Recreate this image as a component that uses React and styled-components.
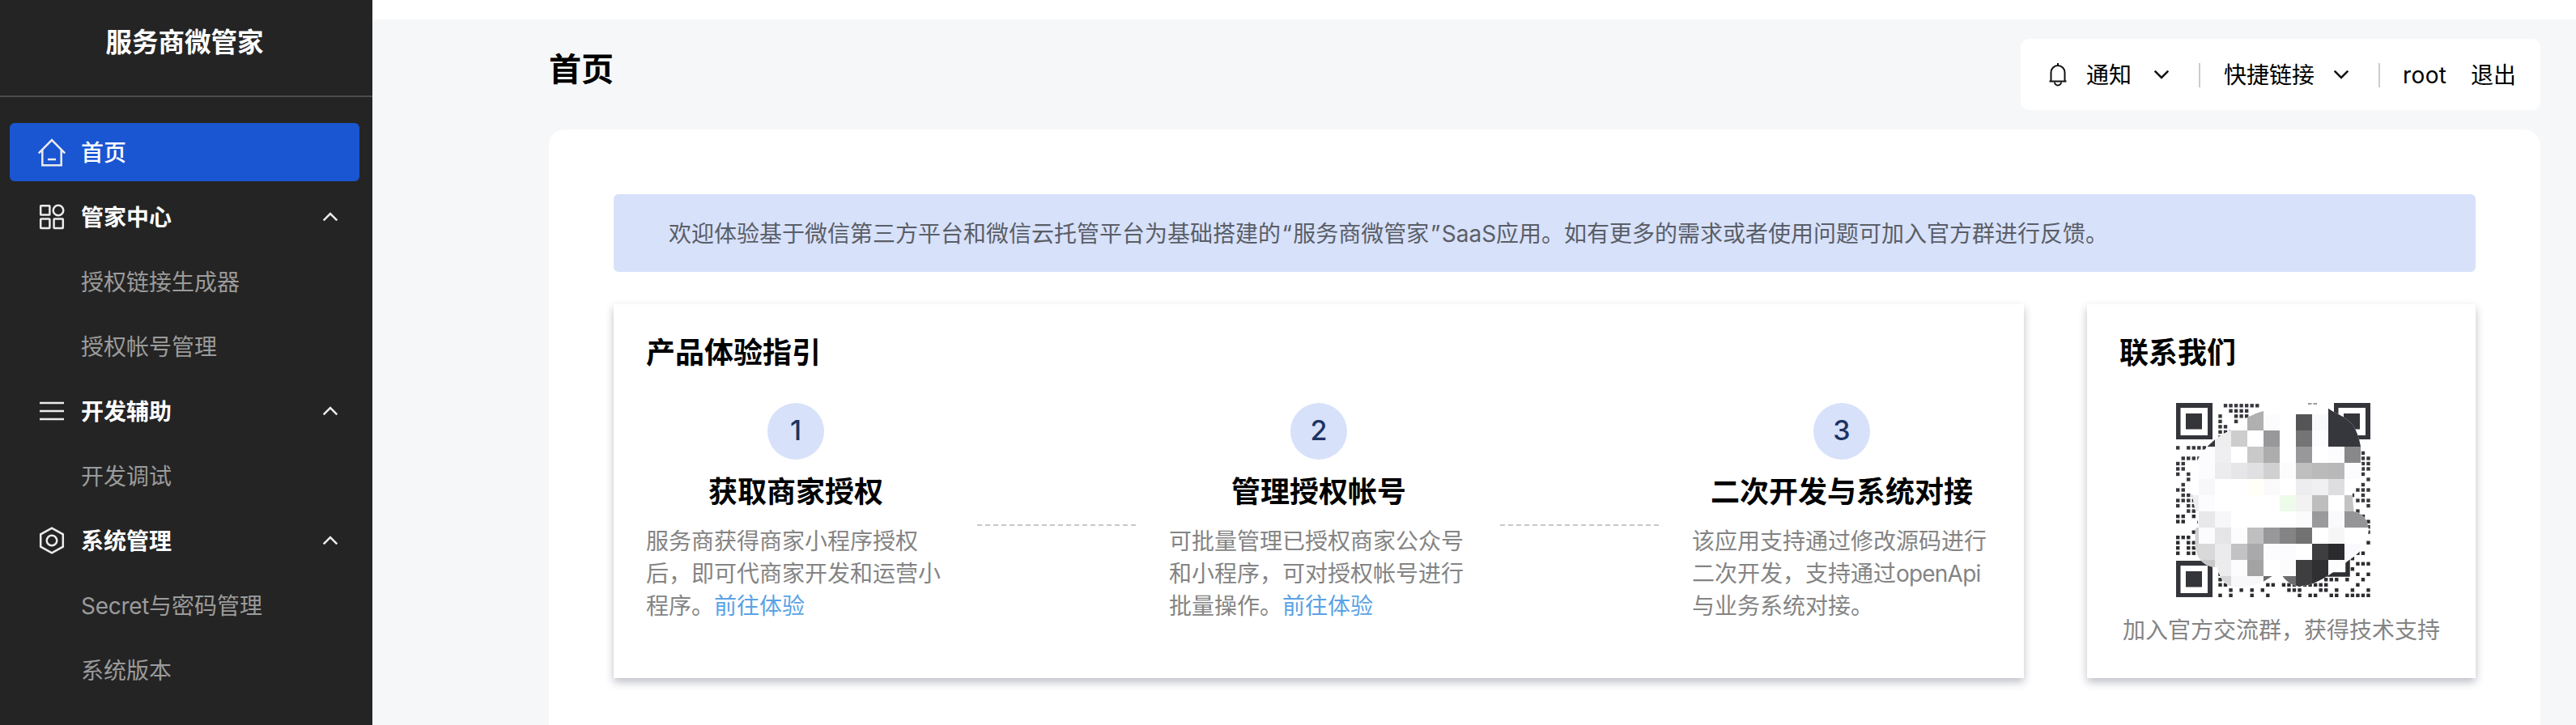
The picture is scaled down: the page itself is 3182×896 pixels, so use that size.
import React from "react";
import styled, { createGlobalStyle, css } from "styled-components";

const GlobalStyle = createGlobalStyle`
  *, *::before, *::after { box-sizing: border-box; }
  html, body { margin: 0; padding: 0; }
  body {
    background: #fff;
    color: #000;
    font-family: Inter, "Noto Sans CJK SC", sans-serif;
    font-size: 28px;
    line-height: 40px;
  }
  h1, h2, h3, p { margin: 0; }
`;

const Page = styled.div`
  display: flex;
  height: 896px;
  overflow: hidden;
`;

/* Latin run inside Chinese text, with its own tracking */
const Latin = styled.span`
  letter-spacing: ${(p) => p.$track}px;
`;

/* ---------- sidebar ---------- */

const Sidebar = styled.aside`
  width: 460px;
  flex: none;
  background: #242424;
  color: #fff;
`;

const Brand = styled.div`
  height: 120px;
  padding: 31px 4px 0 0;
  border-bottom: 2px solid #4b4b4b;
  text-align: center;
  font-size: 32.5px;
  font-weight: 700;
  line-height: 44px;
`;

const Menu = styled.nav`
  display: flex;
  flex-direction: column;
  gap: 8px;
  padding: 32px 16px 0 12px;
`;

const MenuRow = styled.a`
  display: flex;
  align-items: center;
  height: 72px;
  padding: 0 26px 0 32px;
  border-radius: 6px;
  white-space: nowrap;
  font-weight: ${(p) => (p.$kind === "group" ? 700 : p.$kind === "home" ? 500 : 400)};
  color: ${(p) => (p.$kind === "sub" ? "#9b9b9b" : "#fff")};
  ${(p) => p.$kind === "sub" && css`padding-left: 88px;`}
  ${(p) => p.$kind === "home" && css`background: #1a56d2;`}
`;

const MenuIcon = styled.svg`
  width: 40px;
  height: 40px;
  flex: none;
  margin-right: 16px;
  fill: none;
  stroke: #ebebeb;
  stroke-width: 2.5;
`;

const MenuLabel = styled.span`
  flex: 1;
  padding-top: 2px;
`;

const ChevronSvg = styled.svg`
  width: 20px;
  height: 12px;
  flex: none;
  fill: none;
  stroke: ${(p) => p.$color};
  stroke-width: 2.5;
  transform: ${(p) => (p.$up ? "none" : "rotate(180deg)")};
`;

const Chevron = ({ up, color }) => (
  <ChevronSvg viewBox="0 0 20 12" $up={up} $color={color}>
    <path d="M1.7 10.3 10 2l8.3 8.3" />
  </ChevronSvg>
);

const icons = {
  home: (
    <>
      <path d="M3.8 21.3 20 5l16.2 16.3" />
      <path d="M8.3 17v19.2h23.4V17" />
      <path d="M15 29h10" />
    </>
  ),
  app: (
    <>
      <rect x="6.2" y="6.2" width="11.2" height="11.3" rx="0.6" />
      <circle cx="28" cy="12" r="6.3" />
      <rect x="6.2" y="22.6" width="11.2" height="11.3" rx="0.6" />
      <rect x="22.6" y="22.6" width="11.2" height="11.3" rx="0.6" />
    </>
  ),
  list: <path d="M5 10h30M5 20h30M5 30h30" />,
  setting: (
    <>
      <path d="M20 4.7 33.8 12.3v15.4L20 35.3 6.2 27.7V12.3z" />
      <circle cx="20" cy="20" r="6.3" />
    </>
  ),
};

const menu = [
  { kind: "home", label: "首页", icon: "home" },
  { kind: "group", label: "管家中心", icon: "app" },
  { kind: "sub", label: "授权链接生成器" },
  { kind: "sub", label: "授权帐号管理" },
  { kind: "group", label: "开发辅助", icon: "list" },
  { kind: "sub", label: "开发调试" },
  { kind: "group", label: "系统管理", icon: "setting" },
  { kind: "sub", latin: "Secret", label: "与密码管理" },
  { kind: "sub", label: "系统版本" },
];

/* ---------- main area ---------- */

const Main = styled.main`
  flex: 1;
  margin-top: 24px;
  padding: 24px 44px 0 218px;
  background: #f6f7f9;
  display: flex;
  flex-direction: column;
`;

const Header = styled.header`
  display: flex;
  justify-content: space-between;
  height: 112px;
  flex: none;
`;

const PageTitle = styled.h1`
  padding-top: 10px;
  font-size: 40px;
  font-weight: 700;
  line-height: 56px;
`;

const Toolbar = styled.div`
  display: flex;
  align-items: center;
  width: 642px;
  height: 88px;
  padding: 0 30px 0 30px;
  border-radius: 10px;
  background: #fff;
  white-space: nowrap;
`;

const BellSvg = styled.svg`
  width: 32px;
  height: 32px;
  margin-right: 19px;
  fill: none;
  stroke: #111;
  stroke-width: 2;
`;

const ToolText = styled.span`
  width: ${(p) => p.$width}px;
  flex: none;
  padding-top: 2px;
`;

const Divider = styled.i`
  width: 2px;
  height: 30px;
  flex: none;
  margin: 2px ${(p) => p.$after}px 0 36px;
  background: #ccc;
`;

const Panel = styled.section`
  flex: 1;
  padding: 80px 80px 0;
  border-radius: 20px 20px 0 0;
  background: #fff;
`;

const Banner = styled.p`
  height: 96px;
  padding: 0 68px;
  border-radius: 6px;
  background: #d7e1fa;
  color: #5a5e67;
  line-height: 98px;
  white-space: nowrap;
`;

const Quote = styled.span`
  padding: 0 1.5px;
`;

const Cards = styled.div`
  display: flex;
  justify-content: space-between;
  margin-top: 40px;
`;

const Card = styled.section`
  width: ${(p) => p.$width}px;
  height: 462px;
  padding: 35px 40px 0;
  background: #fff;
  box-shadow: 0 5px 10px rgba(54, 58, 80, 0.32);
`;

const CardTitle = styled.h2`
  font-size: 36px;
  font-weight: 700;
  line-height: 50px;
`;

const Steps = styled.div`
  display: flex;
  margin-top: 37px;
`;

const Step = styled.div`
  width: 370px;
  flex: none;
  display: flex;
  flex-direction: column;
  align-items: center;
`;

const StepNumber = styled.div`
  width: 70px;
  height: 70px;
  border-radius: 50%;
  background: #d7e1fa;
  color: #1d3362;
  font-size: 34px;
  font-weight: 500;
  line-height: 68px;
  text-align: center;
`;

const StepTitle = styled.h3`
  margin-top: 15px;
  font-size: 36px;
  font-weight: 700;
  line-height: 50px;
  white-space: nowrap;
`;

const StepText = styled.p`
  width: 100%;
  margin-top: 16px;
  color: #848484;
`;

const StepLink = styled.a`
  color: #5aa2e5;
`;

const StepLine = styled.div`
  width: 196px;
  height: 2px;
  flex: none;
  margin: 150px 41px 0 39px;
  background: repeating-linear-gradient(90deg, #c8c8c8 0 6px, transparent 6px 10px);
`;

const QrSvg = styled.svg`
  display: block;
  width: 240px;
  height: 240px;
  margin: 37px 0 0 70px;
`;

const Caption = styled.p`
  margin-top: 21px;
  color: #848484;
  text-align: center;
  white-space: nowrap;
`;

/* Visible modules of the code, row by row, as column numbers */
const qrRows = {
  0: [9, 10, 11, 12, 13, 14, 15],
  1: [10, 11, 12, 13],
  2: [8, 11, 12, 13],
  3: [8, 11],
  4: [8, 9],
  5: [8, 9, 10],
  6: [8],
  8: [0, 2, 3, 4, 5, 6],
  9: [35],
  10: [1, 2, 3, 4, 35, 36],
  11: [0, 1, 4, 35, 36],
  12: [0, 1, 35, 36],
  13: [0, 2, 35],
  14: [2, 36],
  15: [1, 35],
  16: [0, 1, 34, 35, 36],
  17: [1, 2, 3, 33, 35],
  18: [0, 1, 2, 3, 34, 35, 36],
  19: [0, 2, 3, 36],
  20: [2, 3, 34],
  21: [0, 1, 3, 35],
  22: [0, 1, 4, 36],
  23: [4, 36],
  24: [3, 36],
  25: [0, 1, 2],
  26: [0, 2, 3, 36],
  27: [0, 2, 3],
  28: [0, 2, 3, 34, 35],
  29: [33],
  30: [34, 35, 36],
  31: [33],
  32: [8, 34, 36],
  33: [8, 9, 28, 29, 30, 32, 35],
  34: [8, 9, 17, 18, 20, 21, 22, 23, 24, 25, 26, 27, 28, 34],
  35: [10, 12, 14, 16, 21, 22, 23, 27, 28, 30, 33, 36],
  36: [8, 10, 14, 17, 23, 25, 26, 29, 30, 32, 33, 34, 35, 36],
};

/* 20px tiles of the mosaic; the first column starts at x=8, the first row at y=-6 */
const W = "#fff";
const P = "#fcfcff";
const D = "#36373c";
const mosaic = [
  [W, W, W, W, "#adadae", W, W, W, W, D, W, W],
  [W, W, W, W, "#b0b0b1", P, W, "#555557", "#f9f9f9", D, D, W],
  [W, D, "#eeeeef", "#cdcdce", W, "#98989a", W, "#747475", P, D, D, W],
  [W, P, "#efeff1", W, "#c9c9ca", "#adadae", W, "#98989a", W, P, "#88888a", W],
  [W, P, "#ececee", "#e6e6e8", "#e0e0e2", "#d0d0d1", "#fcfcfc", "#bfbfc0", "#bababb", "#b8b8b9", P, W],
  [W, "#f7f7fa", W, W, "#fffff8", "#fafafb", W, "#ededef", "#f0f0f2", "#dedee0", W, W],
  ["#efeff0", P, W, W, W, W, "#edfbea", "#f2f2f2", "#bebebf", W, "#c3c3c4", W],
  [W, "#e8e8ea", "#f7f7fa", W, W, W, W, "#fbfbfb", "#9a9a9c", "#fafafc", "#959597", "#959597"],
  ["#d0d0d2", P, "#e5e5e7", "#fcfcfc", "#bfbfc0", "#98989a", "#848485", "#727273", W, "#f6f6f6", W, W],
  ["#d6d6d8", "#d9d9da", "#ebebed", "#c2c2c3", "#a9a9ab", P, P, W, "#3e3e40", "#2b2b2d", "#fafafe", W],
  ["#c8c8c9", "#c8c8c9", "#ececec", P, "#a3a3a4", W, "#fcfcfc", "#3e3e3f", "#303032", "#fdfdfd", W, W],
  [W, W, "#d6d6d6", "#f8f8fb", "#f8f8fb", "#6d6d6e", "#6d6d6e", "#3e3e40", "#303033", W, W, W],
];

const Finder = ({ x, y }) => (
  <g transform={`translate(${x} ${y})`}>
    <path fill="#34353a" fillRule="evenodd" d="M0 0h45v45H0zM5.5 6v34H39V6z" />
    <rect x="12" y="13" width="20" height="19.5" fill="#34353a" />
  </g>
);

const QrCode = () => (
  <QrSvg viewBox="0 0 240 240">
    <defs>
      <clipPath id="smudge">
        <path
          transform="translate(-18 -18) scale(.33333)"
          d="M378 84Q345 92 318 108Q280 138 256 155Q225 168 198 190Q170 212 150 240Q132 262 130 285
             L130 320Q104 360 112 390L136 500Q124 515 125 540L125 590Q132 625 150 642Q172 664 207 664
             Q215 700 232 718Q246 732 262 736Q320 742 378 716L414 694L444 690Q464 720 490 730
             Q525 738 560 724Q600 708 640 678L690 640Q738 608 755 575Q774 530 762 496Q748 462 713 457
             L706 385Q742 350 742 290L738 215Q730 170 712 140Q690 112 660 98Q638 88 618 74
             Q600 60 575 59L540 60Q530 46 500 46L400 46Q378 50 378 84Z"
        />
      </clipPath>
    </defs>
    {Object.entries(qrRows).map(([r, cols]) =>
      cols.map((c) => (
        <rect
          key={`${r}-${c}`}
          x={c * 6.536}
          y={1.1 + r * 6.515}
          width="4.4"
          height="4.4"
          fill={r > 20 ? "#2c2d30" : "#37383d"}
        />
      ))
    )}
    <Finder x={0} y={0} />
    <Finder x={195} y={0} />
    <Finder x={0} y={195} />
    <path d="M185 185h27v27h-27z" fill="none" stroke="#2d2e31" strokeWidth="5.5" />
    <g clipPath="url(#smudge)">
      <rect width="240" height="240" fill="#fff" />
      {mosaic.map((row, r) =>
        row.map((fill, c) => (
          <rect key={`${r}-${c}`} x={8 + c * 20} y={-6 + r * 20} width="20" height="20" fill={fill} />
        ))
      )}
    </g>
    <path d="M163 1h4.5M169.5 1h4.5" stroke="#36373c" strokeWidth="1.2" />
  </QrSvg>
);

const steps = [
  {
    title: "获取商家授权",
    text: "服务商获得商家小程序授权后，即可代商家开发和运营小程序。",
    link: "前往体验",
  },
  {
    title: "管理授权帐号",
    text: "可批量管理已授权商家公众号和小程序，可对授权帐号进行批量操作。",
    link: "前往体验",
  },
  {
    title: "二次开发与系统对接",
    text: (
      <>
        该应用支持通过修改源码进行二次开发，支持通过<Latin $track={-0.8}>openApi</Latin>
        与业务系统对接。
      </>
    ),
  },
];

export default function App() {
  return (
    <>
      <GlobalStyle />
      <Page>
        <Sidebar>
          <Brand>服务商微管家</Brand>
          <Menu>
            {menu.map((item) => (
              <MenuRow key={item.label} $kind={item.kind}>
                {item.icon && <MenuIcon viewBox="0 0 40 40">{icons[item.icon]}</MenuIcon>}
                <MenuLabel>
                  {item.latin && <Latin $track={-0.3}>{item.latin}</Latin>}
                  {item.label}
                </MenuLabel>
                {item.kind === "group" && <Chevron up color="#ebebeb" />}
              </MenuRow>
            ))}
          </Menu>
        </Sidebar>
        <Main>
          <Header>
            <PageTitle>首页</PageTitle>
            <Toolbar>
              <BellSvg viewBox="0 0 32 32">
                <path d="M16 2v3M5.5 24.5h21M7.5 24.5V13.5a8.500 8.500 0 0 1 17 0v11" />
                <path d="M12 25.5a4 4 0 0 0 8 0" />
              </BellSvg>
              <ToolText $width={83}>通知</ToolText>
              <Chevron color="#111" />
              <Divider $after={29} />
              <ToolText $width={135}>快捷链接</ToolText>
              <Chevron color="#111" />
              <Divider $after={28} />
              <ToolText $width={84}>
                <Latin $track={0.4}>root</Latin>
              </ToolText>
              <ToolText $width={56}>退出</ToolText>
            </Toolbar>
          </Header>
          <Panel>
            <Banner>
              欢迎体验基于微信第三方平台和微信云托管平台为基础搭建的<Quote>“</Quote>服务商微管家
              <Quote>”</Quote>SaaS应用。如有更多的需求或者使用问题可加入官方群进行反馈。
            </Banner>
            <Cards>
              <Card $width={1742}>
                <CardTitle>产品体验指引</CardTitle>
                <Steps>
                  {steps.map((step, i) => (
                    <React.Fragment key={step.title}>
                      {i > 0 && <StepLine />}
                      <Step>
                        <StepNumber>{i + 1}</StepNumber>
                        <StepTitle>{step.title}</StepTitle>
                        <StepText>
                          {step.text}
                          {step.link && <StepLink>{step.link}</StepLink>}
                        </StepText>
                      </Step>
                    </React.Fragment>
                  ))}
                </Steps>
              </Card>
              <Card $width={480}>
                <CardTitle>联系我们</CardTitle>
                <QrCode />
                <Caption>加入官方交流群，获得技术支持</Caption>
              </Card>
            </Cards>
          </Panel>
        </Main>
      </Page>
    </>
  );
}
